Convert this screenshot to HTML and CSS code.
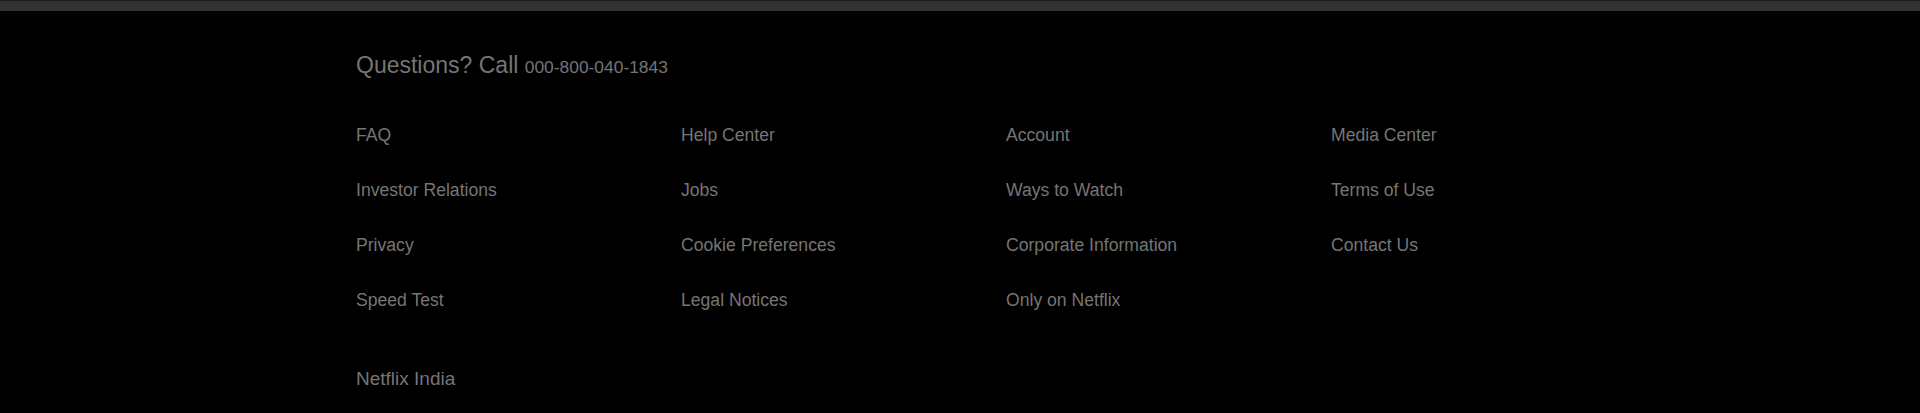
FILE: index.html
```html
<!DOCTYPE html>
<html lang="en">
<head>
<meta charset="utf-8">
<title>Netflix Footer</title>
<link rel="stylesheet" href="styles.css">
</head>
<body>
<div class="top-bar"></div>
<footer class="site-footer">
  <p class="footer-top">Questions? Call <a class="phone" href="#">000-800-040-1843</a></p>
  <ul class="footer-links">
    <li><a href="#">FAQ</a></li>
    <li><a href="#">Help Center</a></li>
    <li><a href="#">Account</a></li>
    <li><a href="#">Media Center</a></li>
    <li><a href="#">Investor Relations</a></li>
    <li><a href="#">Jobs</a></li>
    <li><a href="#">Ways to Watch</a></li>
    <li><a href="#">Terms of Use</a></li>
    <li><a href="#">Privacy</a></li>
    <li><a href="#">Cookie Preferences</a></li>
    <li><a href="#">Corporate Information</a></li>
    <li><a href="#">Contact Us</a></li>
    <li><a href="#">Speed Test</a></li>
    <li><a href="#">Legal Notices</a></li>
    <li><a href="#">Only on Netflix</a></li>
  </ul>
  <p class="footer-country">Netflix India</p>
</footer>
</body>
</html>
```
FILE: styles.css
```css
html, body {
  margin: 0;
  padding: 0;
  background: #000;
}

body {
  font-family: "Liberation Sans", Arial, Helvetica, sans-serif;
  color: #757575;
}

.top-bar {
  height: 10px;
  background: #333;
  border-top: 1px solid #1c1c1c;
}

.site-footer {
  width: 1208px;
  margin: 0 auto;
}

.site-footer a {
  color: #757575;
  text-decoration: none;
}

.footer-top {
  margin: 39px 0 0;
  font-size: 23px;
  line-height: 30px;
}

.phone {
  font-size: 17.4px;
}

.footer-links {
  list-style: none;
  margin: 43px 0 0;
  padding: 0;
  display: grid;
  grid-template-columns: repeat(4, 325px);
  row-gap: 35px;
  font-size: 17.6px;
  line-height: 20px;
}

.footer-links li {
  height: 20px;
}

.footer-country {
  margin: 59px 0 0;
  font-size: 19px;
  line-height: 20px;
}
```
